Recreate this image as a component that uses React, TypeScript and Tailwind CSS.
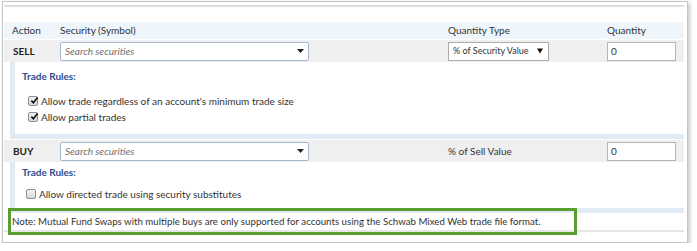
import type { ReactNode } from "react";

const font = { fontFamily: "Lato, 'Open Sans', sans-serif" };

function CheckBox({ checked }: { checked?: boolean }) {
  return (
    <span className="relative flex h-[10px] w-[10px] shrink-0 items-center justify-center rounded-[2px] border border-[#8e8e8e] bg-gradient-to-b from-[#f4f4f4] to-[#d8d8d8]">
      {checked ? (
        <svg viewBox="0 0 10 10" className="absolute left-[1px] top-[-1px] h-[9px] w-[9px]">
          <path d="M1.5 5.2 L3.8 7.6 L8.4 1.8" fill="none" stroke="#111" strokeWidth="1.8" />
        </svg>
      ) : null}
    </span>
  );
}

function Rule({ children, checked, indent }: { children: ReactNode; checked?: boolean; indent: string }) {
  return (
    <div className={`flex h-4 items-center gap-[3px] ${indent}`}>
      <CheckBox checked={checked} />
      <span className="text-[10px] text-[#333]">{children}</span>
    </div>
  );
}

function SearchBox() {
  return (
    <div className="flex h-[19px] w-[249px] items-center justify-between rounded-[2px] border border-[#a6b8cf] bg-white pl-[4px] pr-[4px]">
      <span className="text-[10px] italic text-[#6f6f6f]">Search securities</span>
      <svg viewBox="0 0 7 4" className="h-[4px] w-[7px]">
        <path d="M0 0 H7 L3.5 4 Z" fill="#222" />
      </svg>
    </div>
  );
}

function ActionRow({ action, children }: { action: string; children: ReactNode }) {
  return (
    <div className="grid h-[22px] grid-cols-[56px_388px_159px_77px] items-center bg-[#efefef]">
      <span className="pl-[9px] text-[10px] font-bold text-[#222]">{action}</span>
      <SearchBox />
      {children}
      <div className="flex h-[19px] w-[69px] items-center border border-[#b5b5b5] bg-white pl-[3px] text-[10px] text-[#333]">
        0
      </div>
    </div>
  );
}

export default function App() {
  return (
    <div className="bg-white pt-px pl-[2px]" style={font}>
      <div className="relative h-[242px] w-[686px] border border-[#c4c4c4] bg-white shadow-[2px_2px_4px_rgba(0,0,0,0.22)]">
        <div className="ml-px mt-[3px] h-[2px] w-[680px] bg-[#dfdfdf]" />
        <div className="h-[15px]" />

        <div className="ml-px grid h-[17px] w-[680px] grid-cols-[56px_388px_159px_77px] items-center bg-[#eef5fb] text-[10px] text-[#333]">
          <span className="pl-[8px]">Action</span>
          <span>Security (Symbol)</span>
          <span>Quantity Type</span>
          <span>Quantity</span>
        </div>
        <div className="h-px" />

        <div className="ml-px w-[680px]">
          <ActionRow action="SELL">
            <div className="flex h-[19px] w-[101px] items-center justify-between border border-[#ababab] bg-white pl-[4px] pr-[5px]">
              <span className="text-[9px] text-[#333]">% of Security Value</span>
              <svg viewBox="0 0 6 6" className="h-[6px] w-[6px]">
                <path d="M0 0.5 H6 L3 5.5 Z" fill="#111" />
              </svg>
            </div>
          </ActionRow>

          <div className="ml-[6px] h-[77px] border-b-[5px] border-l-[5px] border-[#e0ebf6] bg-white">
            <div className="pl-[7px] pt-[7px] text-[10px] font-bold leading-[14px] text-[#2f4b86]">Trade Rules:</div>
            <div className="mt-[10px]">
              <Rule checked indent="pl-[13px]">
                Allow trade regardless of an account's minimum trade size
              </Rule>
              <Rule checked indent="pl-[13px]">
                Allow partial trades
              </Rule>
            </div>
          </div>
          <div className="h-px" />

          <ActionRow action="BUY">
            <span className="text-[10px] text-[#333]">% of Sell Value</span>
          </ActionRow>

          <div className="ml-[6px] h-[51px] border-b-[5px] border-l-[5px] border-[#e0ebf6] bg-white">
            <div className="pl-[7px] pt-[3px] text-[10px] font-bold leading-[14px] text-[#2f4b86]">Trade Rules:</div>
            <div className="mt-[7px]">
              <Rule indent="pl-[11px]">Allow directed trade using security substitutes</Rule>
            </div>
          </div>

          <div className="flex h-[17px] items-center pl-[8px] text-[9.7px] text-[#333]">
            Note: Mutual Fund Swaps with multiple buys are only supported for accounts using the Schwab Mixed Web trade file
            format.
          </div>
          <div className="h-[2px] bg-[#e6e6e6]" />
        </div>

        <div className="absolute left-[5px] top-[206px] h-[27px] w-[569px] border-[3px] border-[#5a9f2e]" />
      </div>
    </div>
  );
}
